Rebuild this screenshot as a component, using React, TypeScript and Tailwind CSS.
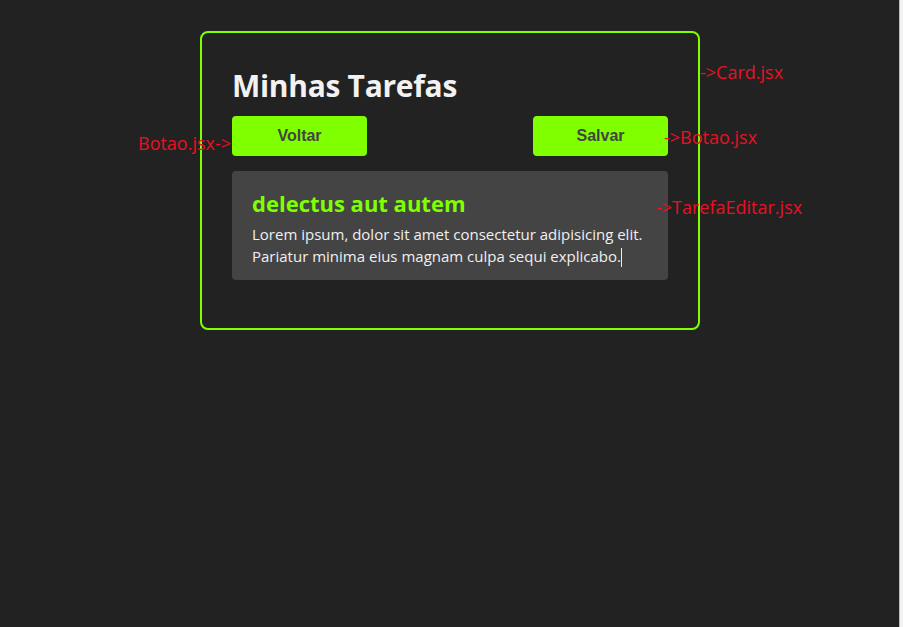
import React from "react";

const ui = { fontFamily: '"Open Sans", "Noto Sans", sans-serif' };
const arial = { fontFamily: '"Liberation Sans", Arial, sans-serif' };

function Botao({ label }: { label: string }) {
  return (
    <button
      className="w-[135px] h-[40px] rounded-[4px] bg-[#7fff00] text-[#444444] text-[16px] font-bold"
      style={arial}
    >
      {label}
    </button>
  );
}

export default function App() {
  return (
    <div className="flex w-[903px] h-[627px] bg-[#222222] overflow-hidden" style={ui}>
      <div className="relative flex-1 flex justify-start items-start pt-[31px] pl-[200px]">
        <div className="w-[500px] border-2 border-[#7fff00] rounded-[8px] px-[30px] pt-[33px] pb-[48px]">
          <h1 className="text-[30px] leading-[40px] font-bold text-[#f2f2f2] tracking-[-0.3px]">
            Minhas Tarefas
          </h1>
          <div className="flex justify-between mt-[10px]">
            <Botao label="Voltar" />
            <Botao label="Salvar" />
          </div>
          <div className="mt-[15px] bg-[#444444] rounded-[4px] px-[20px] pt-[17px] pb-[13px]">
            <h2 className="text-[22px] leading-[30px] font-bold text-[#7fff00]">
              delectus aut autem
            </h2>
            <p className="mt-[5px] text-[15px] leading-[22px] text-[#f0f0f0]">
              Lorem ipsum, dolor sit amet consectetur adipisicing elit.
              <br />
              Pariatur minima eius magnam culpa sequi explicabo.
              <span className="inline-block w-px h-[19px] bg-[#f0f0f0] align-middle" />
            </p>
          </div>
        </div>

        <span className="absolute left-[700px] top-[60px] text-[18px] leading-[24px] text-[#e81123]">
          -&gt;Card.jsx
        </span>
        <span className="absolute left-[138px] top-[131px] text-[18px] leading-[24px] text-[#e81123]">
          Botao.jsx-&gt;
        </span>
        <span className="absolute left-[664px] top-[125px] text-[18px] leading-[24px] text-[#e81123]">
          -&gt;Botao.jsx
        </span>
        <span className="absolute left-[656px] top-[195px] text-[18px] leading-[24px] text-[#e81123]">
          -&gt;TarefaEditar.jsx
        </span>
      </div>
      <div className="w-[4px] border-l border-[#bdbdbd] bg-[#f2f2f2]" />
    </div>
  );
}
